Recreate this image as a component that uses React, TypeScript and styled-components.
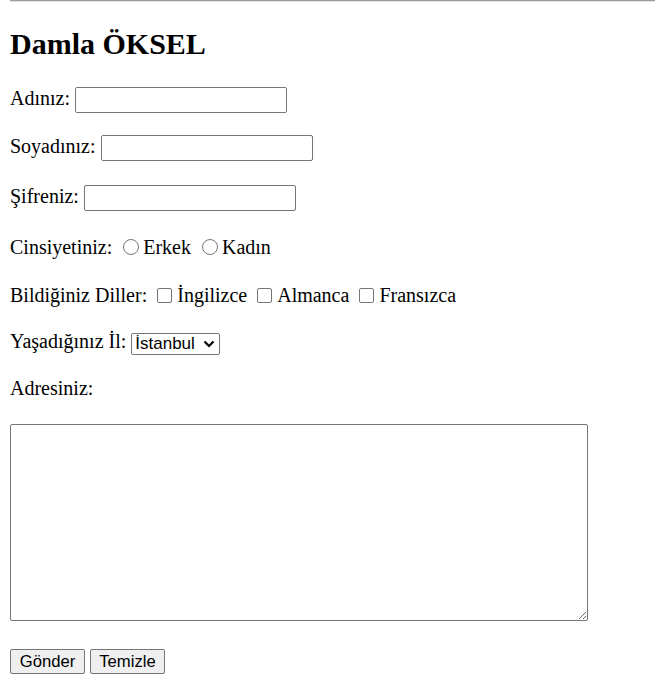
import React from "react";
import styled, { createGlobalStyle } from "styled-components";

const Global = createGlobalStyle`
  html, body { background: #fff; }
  body {
    margin: 0 0 10px 10px;
    font-family: "Liberation Serif", "Times New Roman", serif;
    font-size: 20px;
    color: #000;
  }
`;

const Rule = styled.hr`
  margin: 0 0 10px 0;
  border: none;
  border-top: 1px solid #9a9a9a;
  border-bottom: 1px solid #e4e4e4;
  height: 0;
`;

const Title = styled.h2`
  font-size: 30px;
  font-weight: bold;
  margin: 25px 0 23px;
  line-height: 34px;
`;

const Row = styled.p<{ $h: number }>`
  margin: 20px 0;
  height: ${(p) => p.$h}px;
  line-height: 29px;
  white-space: nowrap;
`;

const TextInput = styled.input`
  box-sizing: border-box;
  width: 212px;
  height: 26px;
  padding: 1px 3px;
  border: 1px solid #767676;
  border-radius: 2px;
  font-family: "Liberation Sans", Arial, sans-serif;
  font-size: 16.67px;
  background: #fff;
  vertical-align: baseline;
  margin: 0;
`;

const Radio = styled.input`
  appearance: none;
  box-sizing: border-box;
  width: 16px;
  height: 16px;
  border: 1px solid #767676;
  border-radius: 50%;
  margin: 0 4px 0 6px;
  background: #fff;
  vertical-align: -1px;
`;

const Check = styled.input`
  appearance: none;
  box-sizing: border-box;
  width: 15px;
  height: 15px;
  border: 1px solid #767676;
  border-radius: 2px;
  margin: 0 5px 0 5px;
  background: #fff;
  vertical-align: -1px;
`;

const SelectBox = styled.span`
  display: inline-flex;
  align-items: center;
  justify-content: space-between;
  box-sizing: border-box;
  width: 89px;
  height: 22px;
  padding: 0 4px 0 3px;
  border: 1px solid #767676;
  border-radius: 2px;
  font-family: "Liberation Sans", Arial, sans-serif;
  font-size: 17px;
  line-height: 20px;
  background: #fff;
  vertical-align: -1px;
`;

const Area = styled.textarea`
  display: block;
  box-sizing: border-box;
  width: 578px;
  height: 197px;
  margin: 0;
  border: 1px solid #767676;
  border-radius: 2px;
  font-family: "Liberation Mono", monospace;
  font-size: 16px;
  resize: both;
`;

const AreaWrap = styled.div`
  margin: 21px 0 0;
`;

const Buttons = styled.div`
  display: flex;
  gap: 5px;
  margin-top: 28px;
`;

const Button = styled.button`
  box-sizing: border-box;
  width: 75px;
  height: 25px;
  padding: 0;
  border: 1px solid #767676;
  border-radius: 2px;
  background: #efefef;
  font-family: "Liberation Sans", Arial, sans-serif;
  font-size: 16.67px;
  color: #000;
`;

const Chevron = () => (
  <svg width="12" height="12" viewBox="0 0 12 12">
    <path d="M1.5 3.5 L6 8 L10.5 3.5" fill="none" stroke="#000" strokeWidth="2.2" />
  </svg>
);

export default function App() {
  return (
    <>
      <Global />
      <Rule />
      <Title>Damla ÖKSEL</Title>
      <form onSubmit={(e) => e.preventDefault()}>
        <Row $h={28}>
          Adınız: <TextInput type="text" />
        </Row>
        <Row $h={30}>
          Soyadınız: <TextInput type="text" />
        </Row>
        <Row $h={31}>
          Şifreniz: <TextInput type="password" />
        </Row>
        <Row $h={28}>
          Cinsiyetiniz: <Radio type="radio" name="c" />Erkek <Radio type="radio" name="c" />Kadın
        </Row>
        <Row $h={26}>
          Bildiğiniz Diller: <Check type="checkbox" />İngilizce <Check type="checkbox" />Almanca <Check type="checkbox" />Fransızca
        </Row>
        <Row $h={27}>
          Yaşadığınız İl:{" "}
          <SelectBox>
            İstanbul
            <Chevron />
          </SelectBox>
        </Row>
        <Row $h={29}>Adresiniz:</Row>
        <AreaWrap>
          <Area />
        </AreaWrap>
        <Buttons>
          <Button type="submit">Gönder</Button>
          <Button type="reset">Temizle</Button>
        </Buttons>
      </form>
    </>
  );
}
